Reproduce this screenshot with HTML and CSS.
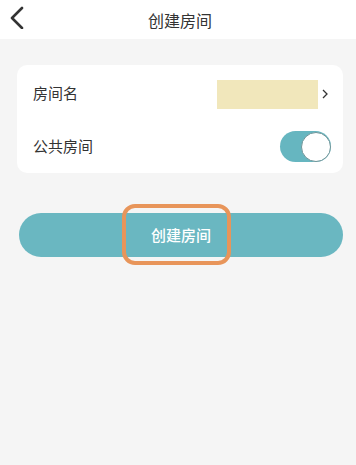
FILE: index.html
```html
<!DOCTYPE html>
<html lang="zh">
<head>
<meta charset="utf-8">
<link rel="stylesheet" href="styles.css">
</head>
<body>
<header class="topbar">
  <svg class="back" width="16" height="24" viewBox="0 0 16 24"><path d="M13 3 L3 13 L13 23" fill="none" stroke="#333" stroke-width="2.6" stroke-linecap="round" stroke-linejoin="round"/></svg>
  <div class="title">创建房间</div>
</header>
<main class="content">
  <section class="card">
    <div class="row row-first">
      <span class="label">房间名</span>
      <div class="value">
        <span class="name-box"></span>
        <svg class="chev" width="6" height="10" viewBox="0 0 6 10"><path d="M1 1 L5 5 L1 9" fill="none" stroke="#333" stroke-width="1.3"/></svg>
      </div>
    </div>
    <div class="row row-second">
      <span class="label label-second">公共房间</span>
      <span class="toggle"><span class="knob"></span></span>
    </div>
  </section>
  <div class="btn-wrap">
    <button class="create-btn">创建房间</button>
    <span class="highlight"></span>
  </div>
</main>
</body>
</html>
```
FILE: styles.css
```css
html, body {
  margin: 0;
  padding: 0;
}
body {
  background: #f5f5f5;
  font-family: "Noto Sans CJK SC", "Noto Sans", sans-serif;
  color: #333;
  width: 356px;
  height: 465px;
  overflow: hidden;
}
.topbar {
  height: 39px;
  background: #fff;
  position: relative;
  display: flex;
  align-items: center;
  justify-content: center;
}
.back {
  position: absolute;
  left: 9px;
  top: 5px;
}
.title {
  font-size: 16px;
  color: #333;
  margin-left: 4px;
}
.content {
  padding-top: 26px;
}
.card {
  background: #fff;
  margin: 0 13px 0 17px;
  border-radius: 10px;
}
.row {
  display: flex;
  align-items: center;
  justify-content: space-between;
  padding: 0 12px 0 16px;
}
.row-first {
  height: 58px;
}
.row-second {
  height: 50px;
}
.label {
  font-size: 15px;
  color: #333;
  margin-top: -4px;
}
.label-second {
  margin-top: -6px;
}
.value {
  display: flex;
  align-items: center;
}
.name-box {
  width: 101px;
  height: 29px;
  background: #f1e7bb;
}
.chev {
  margin-left: 4px;
  margin-right: 3px;
}
.toggle {
  width: 51px;
  height: 31px;
  border-radius: 16px;
  background: #66b6c0;
  display: flex;
  justify-content: flex-end;
  align-items: center;
  margin-top: -3px;
}
.knob {
  width: 28px;
  height: 28px;
  border-radius: 50%;
  background: #fff;
  border: 1.5px solid #6f9599;
}
.btn-wrap {
  position: relative;
  margin: 40px 13px 0 19px;
}
.create-btn {
  display: block;
  width: 100%;
  height: 44px;
  border: none;
  border-radius: 22px;
  background: #6ab7c1;
  color: #fff;
  font-family: "Noto Sans CJK SC", "Noto Sans", sans-serif;
  font-size: 15px;
  font-weight: 500;
  padding: 0 0 2px 0;
}
.highlight {
  position: absolute;
  left: 103px;
  top: -9px;
  width: 109px;
  height: 61px;
  box-sizing: border-box;
  border: 4.5px solid #e8955a;
  border-radius: 13px;
}
```
